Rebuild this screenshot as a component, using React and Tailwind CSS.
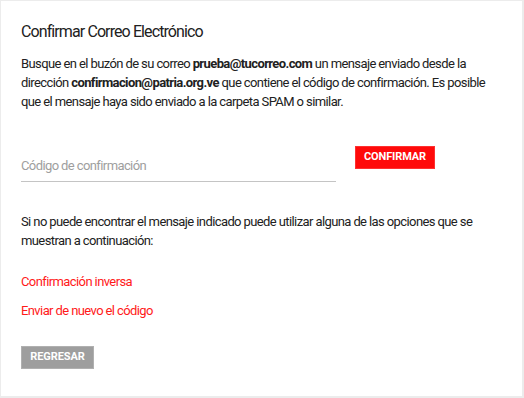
export default function App() {
  return (
    <div className="w-[524px] h-[398px] bg-[#ececec] pt-px pl-px pr-[2px] pb-[2px]" style={{ fontFamily: 'Roboto, "Liberation Sans", sans-serif' }}>
      <div className="h-full bg-white pl-5 pr-5 pt-[19px] text-[#212121]">
        <h1 className="text-[16px] leading-6 font-normal tracking-[-0.9px]">Confirmar Correo Electrónico</h1>
        <p className="mt-[10px] text-[13px] leading-[19px] tracking-[-0.6px]">
          Busque en el buzón de su correo <b className="font-bold">prueba@tucorreo.com</b> un mensaje enviado desde la
          dirección <b className="font-bold">confirmacion@patria.org.ve</b> que contiene el código de confirmación. Es posible
          que el mensaje haya sido enviado a la carpeta SPAM o similar.
        </p>

        <div className="mt-[35px] flex items-start">
          <input
            type="text"
            placeholder="Código de confirmación"
            className="w-[315px] h-[36px] pt-[4px] border-b border-[#c4c4c4] text-[13px] tracking-[-0.6px] outline-none placeholder:text-[#9e9e9e]"
          />
          <button className="ml-[19px] w-[80px] h-[23px] bg-[#ff0a0a] border border-[#ff3030] text-white text-[11px] font-bold tracking-[-0.1px] uppercase">
            Confirmar
          </button>
        </div>

        <p className="mt-[30px] text-[13px] leading-[19px] tracking-[-0.6px]">
          Si no puede encontrar el mensaje indicado puede utilizar alguna de las opciones que se
          muestran a continuación:
        </p>

        <div className="mt-[22px] flex flex-col gap-[10px] text-[13px] leading-[19px] tracking-[-0.6px] text-[#ff1a1a]">
          <a href="#">Confirmación inversa</a>
          <a href="#">Enviar de nuevo el código</a>
        </div>

        <button className="mt-[26px] w-[73px] h-[23px] bg-[#9e9e9e] border border-[#b0b0b0] text-white text-[11px] font-bold tracking-[-0.1px] uppercase">
          Regresar
        </button>
      </div>
    </div>
  );
}
